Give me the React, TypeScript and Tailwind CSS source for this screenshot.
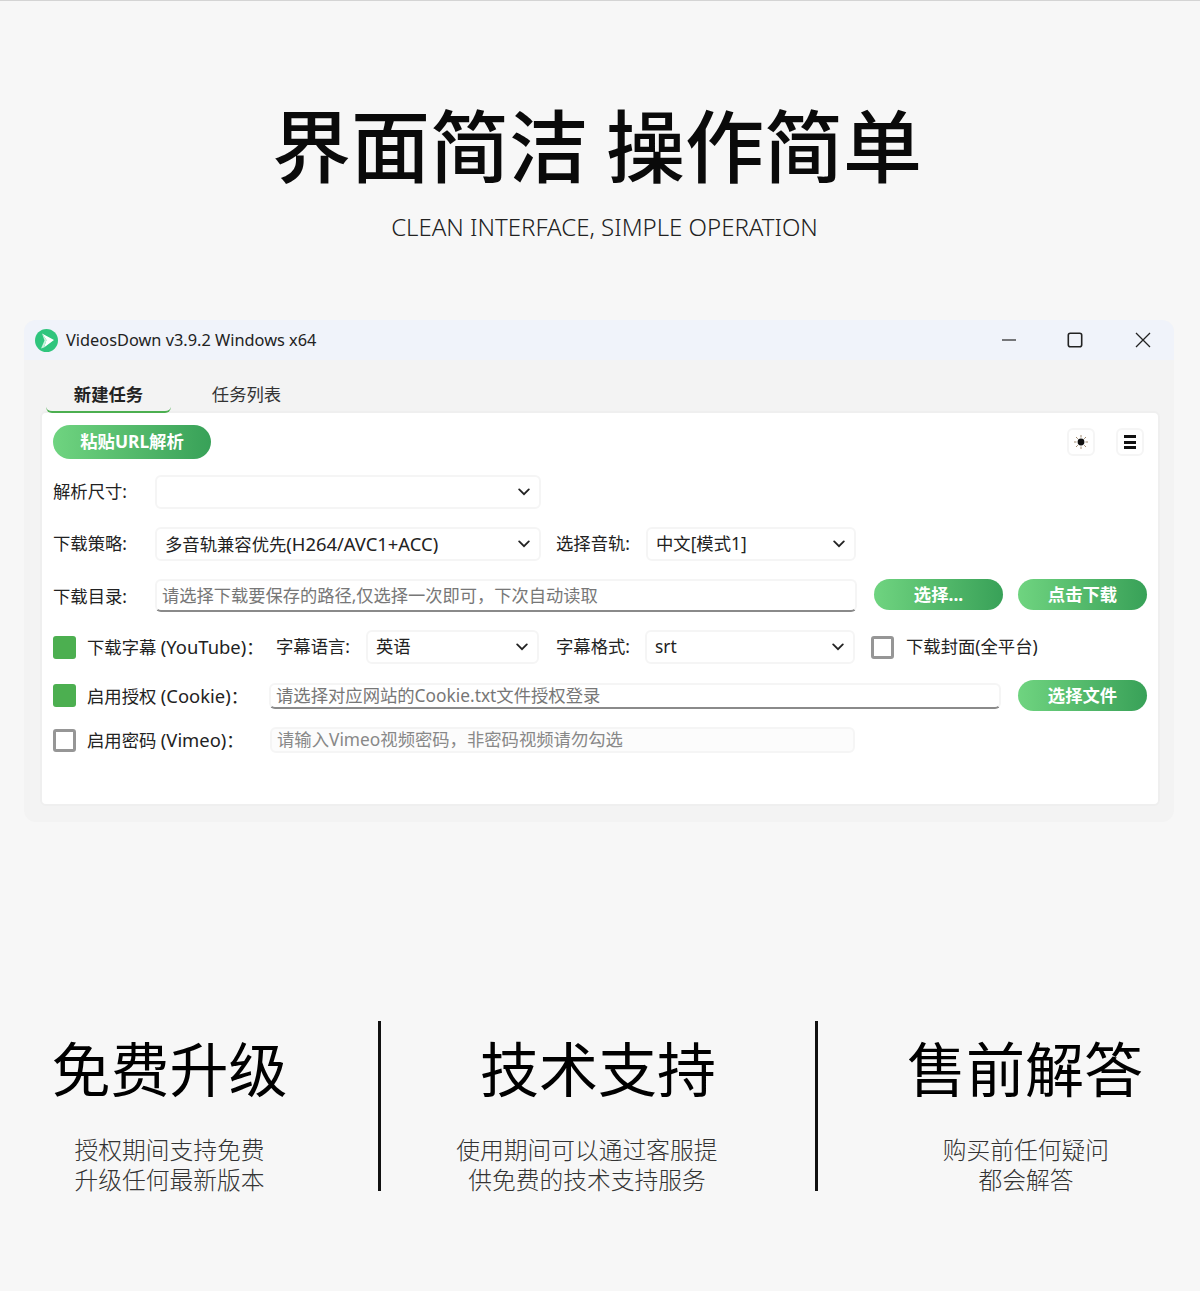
import type { ReactNode } from "react";

const btn =
  "flex shrink-0 items-center justify-center rounded-full bg-gradient-to-r from-[#6fd480] to-[#38a158] text-[17.33px] font-bold text-white";
const latin = "text-[18.4px]";

function Chevron() {
  return (
    <svg fill="none" height="8" stroke="#222" strokeLinecap="round" strokeWidth="1.8" viewBox="0 0 12 8" width="12">
      <path d="M1.2 1.4 6 6.2l4.8-4.8" />
    </svg>
  );
}

function Select({ className, value }: { className: string; value?: ReactNode }) {
  return (
    <div
      className={`flex h-[34px] shrink-0 items-center justify-between rounded-md border-2 border-[#f5f5f5] bg-white pr-[9px] pl-2 text-[17.33px] whitespace-nowrap text-[#222] ${className}`}
    >
      <span>{value}</span>
      <Chevron />
    </div>
  );
}

function Box({ on }: { on?: boolean }) {
  return (
    <div
      className={
        on
          ? "h-[23px] w-[23px] shrink-0 rounded-[3px] bg-[#4caf50]"
          : "h-[23px] w-[23px] shrink-0 rounded-[3px] border-[3px] border-[#969696] bg-white"
      }
    />
  );
}

function Label({ className, children }: { className: string; children: ReactNode }) {
  return <div className={`shrink-0 text-[17.33px] whitespace-nowrap text-[#222] ${className}`}>{children}</div>;
}

function Feature({
  title,
  lines,
  className,
  textClass,
}: {
  title: string;
  lines: string[];
  className: string;
  textClass: string;
}) {
  return (
    <div className={`flex flex-col ${className}`}>
      <div className="text-center text-[59px] leading-[92px] font-normal text-black">{title}</div>
      <div className={`mt-[21px] text-center text-[23.75px] leading-[30px] font-light text-[#333] ${textClass}`}>
        {lines.map((l) => (
          <div key={l}>{l}</div>
        ))}
      </div>
    </div>
  );
}

export default function App() {
  return (
    <div className="h-[1291px] w-[1200px] overflow-hidden bg-[#f7f7f7] font-['Noto_Sans','Noto_Sans_CJK_SC',sans-serif]">
      <div className="h-px bg-[#d4d4d4]" />

      <h1 className="mt-[85px] pr-[6px] text-center text-[79px] leading-[114px] font-medium text-[#0a0a0a] font-['Noto_Sans_CJK_SC',sans-serif]">
        界面简洁 操作简单
      </h1>
      <div className="mt-[11px] pl-[9px] text-center text-[24px] leading-[32px] font-light text-[#222] [font-stretch:90%]">
        CLEAN INTERFACE, SIMPLE OPERATION
      </div>

      {/* window */}
      <div className="mt-[77px] ml-[24px] h-[502px] w-[1150px] rounded-xl bg-[#f3f3f3]">
        <div className="flex h-[40px] items-center rounded-t-xl bg-[#f0f3fa] pr-[23px] pl-[11px]">
          <svg height="23" viewBox="0 0 23 23" width="23">
            <circle cx="11.5" cy="11.5" fill="#2fc57d" r="11.5" />
            <path d="M7 4.5 19 11 9 18.5 11.5 11Z" fill="#fff" />
            <path d="M9 18.5 6 19.5 9.5 11.5 7 4.5 11.5 11Z" fill="#c9f2dc" />
          </svg>
          <span className="ml-[8px] text-[16.35px] text-[#222]">VideosDown v3.9.2 Windows x64</span>
          <div className="ml-auto flex items-center">
            <svg fill="none" height="16" stroke="#222" strokeWidth="1.2" viewBox="0 0 16 16" width="16">
              <path d="M1 8h14" />
            </svg>
            <svg className="ml-[50px]" fill="none" height="16" stroke="#222" strokeWidth="1.6" viewBox="0 0 16 16" width="16">
              <rect height="13.4" rx="2" width="13.4" x="1.3" y="1.3" />
            </svg>
            <svg className="ml-[52px]" fill="none" height="16" stroke="#222" strokeWidth="1.3" viewBox="0 0 16 16" width="16">
              <path d="m1 1 14 14M15 1 1 15" />
            </svg>
          </div>
        </div>

        <div className="relative z-10 mb-[-2px] ml-[22px] flex h-[53px] items-end text-[17.33px]">
          <div className="flex h-[38px] w-[125px] justify-center rounded-b-md border-b-2 border-[#4caf50] pt-[6px] leading-[26px] font-bold text-[#222]">
            新建任务
          </div>
          <div className="flex h-[38px] w-[151px] justify-center pt-[6px] leading-[26px] text-[#333]">任务列表</div>
        </div>

        <div className="ml-[16px] h-[395px] w-[1120px] rounded-md border-2 border-[#efefef] bg-white pt-[12px] pr-[11px] pl-[11px]">
          <div className="flex h-[34px] items-center">
            <div className={`${btn} h-[34px] w-[158px]`}>粘贴URL解析</div>
            <div className="mr-[3px] ml-auto flex items-center gap-[21px]">
              <div className="flex h-[28px] w-[28px] items-center justify-center rounded-md border-2 border-[#f5f5f5]">
                <svg fill="none" height="14" stroke="#a08a70" strokeWidth="1" viewBox="0 0 14 14" width="14">
                  <path d="M7 0v2.5M7 11.5V14M0 7h2.5M11.5 7H14M2 2l1.8 1.8M10.2 10.2 12 12M12 2l-1.8 1.8M3.8 10.2 2 12" />
                  <circle cx="7" cy="7" fill="#111" r="3.4" stroke="none" />
                </svg>
              </div>
              <div className="flex h-[28px] w-[28px] flex-col items-center justify-center gap-[2.5px] rounded-md border-2 border-[#f5f5f5]">
                <div className="h-[3px] w-[12px] bg-[#111]" />
                <div className="h-[3px] w-[12px] bg-[#111]" />
                <div className="h-[3px] w-[12px] bg-[#111]" />
              </div>
            </div>
          </div>

          <div className="mt-[16px] flex items-center">
            <Label className="w-[102px]">解析尺寸:</Label>
            <Select className="w-[386px]" />
          </div>

          <div className="mt-[18px] flex items-center">
            <Label className="w-[102px]">下载策略:</Label>
            <Select
              className="w-[386px]"
              value={
                <>
                  多音轨兼容优先<span className={latin}>(H264/AVC1+ACC)</span>
                </>
              }
            />
            <Label className="ml-[15px] w-[90px]">选择音轨:</Label>
            <Select className="w-[210px]" value="中文[模式1]" />
          </div>

          <div className="mt-[18px] flex items-start">
            <Label className="w-[102px] leading-[34px]">下载目录:</Label>
            <div className="flex h-[33px] w-[702px] shrink-0 items-center rounded-md border-2 border-[#f5f5f5] border-b-[#8a8a8a] bg-white pl-[5px] text-[17.25px] text-[#777]">
              请选择下载要保存的路径,仅选择一次即可，下次自动读取
            </div>
            <div className={`${btn} ml-[17px] h-[31px] w-[129px]`}>选择...</div>
            <div className={`${btn} ml-[15px] h-[31px] w-[129px]`}>点击下载</div>
          </div>

          <div className="mt-[17px] flex items-center">
            <Box on />
            <Label className="ml-[11px] w-[189px]">
              下载字幕 <span className={latin}>(YouTube)</span>：
            </Label>
            <Label className="w-[90px]">字幕语言:</Label>
            <Select className="w-[173px]" value="英语" />
            <Label className="ml-[17px] w-[89px]">字幕格式:</Label>
            <Select className="w-[210px]" value="srt" />
            <div className="ml-[16px]">
              <Box />
            </div>
            <Label className="ml-[12px]">下载封面(全平台)</Label>
          </div>

          <div className="mt-[16px] flex h-[31px] items-center">
            <Box on />
            <Label className="ml-[11px] w-[182px]">
              启用授权 <span className={latin}>(Cookie)</span>：
            </Label>
            <div className="flex h-[26px] w-[732px] shrink-0 items-center rounded-md border-2 border-[#f5f5f5] border-b-[#8a8a8a] bg-white pl-[5px] text-[17.33px] text-[#777]">
              请选择对应网站的Cookie.txt文件授权登录
            </div>
            <div className={`${btn} ml-[17px] h-[31px] w-[129px]`}>选择文件</div>
          </div>

          <div className="mt-[16px] flex h-[26px] items-center">
            <Box />
            <Label className="ml-[11px] w-[183px]">
              启用密码 <span className={latin}>(Vimeo)</span>：
            </Label>
            <div className="flex h-[26px] w-[585px] shrink-0 items-center rounded-md border-2 border-[#f5f5f5] bg-[#fcfcfc] pl-[5px] text-[17.33px] text-[#888]">
              请输入Vimeo视频密码，非密码视频请勿勾选
            </div>
          </div>
        </div>
      </div>

      {/* bottom features */}
      <div className="mt-[199px] flex h-[170px] font-['Noto_Sans_CJK_SC',sans-serif]">
        <Feature
          className="w-[378px] pr-[39px]"
          lines={["授权期间支持免费", "升级任何最新版本"]}
          textClass=""
          title="免费升级"
        />
        <div className="h-[170px] w-[3px] bg-[#111]" />
        <Feature
          className="w-[434px]"
          lines={["使用期间可以通过客服提", "供免费的技术支持服务"]}
          textClass="pr-[22px]"
          title="技术支持"
        />
        <div className="h-[170px] w-[3px] bg-[#111]" />
        <Feature
          className="w-[382px] pl-[32px]"
          lines={["购买前任何疑问", "都会解答"]}
          textClass="pl-[2px]"
          title="售前解答"
        />
      </div>
    </div>
  );
}
